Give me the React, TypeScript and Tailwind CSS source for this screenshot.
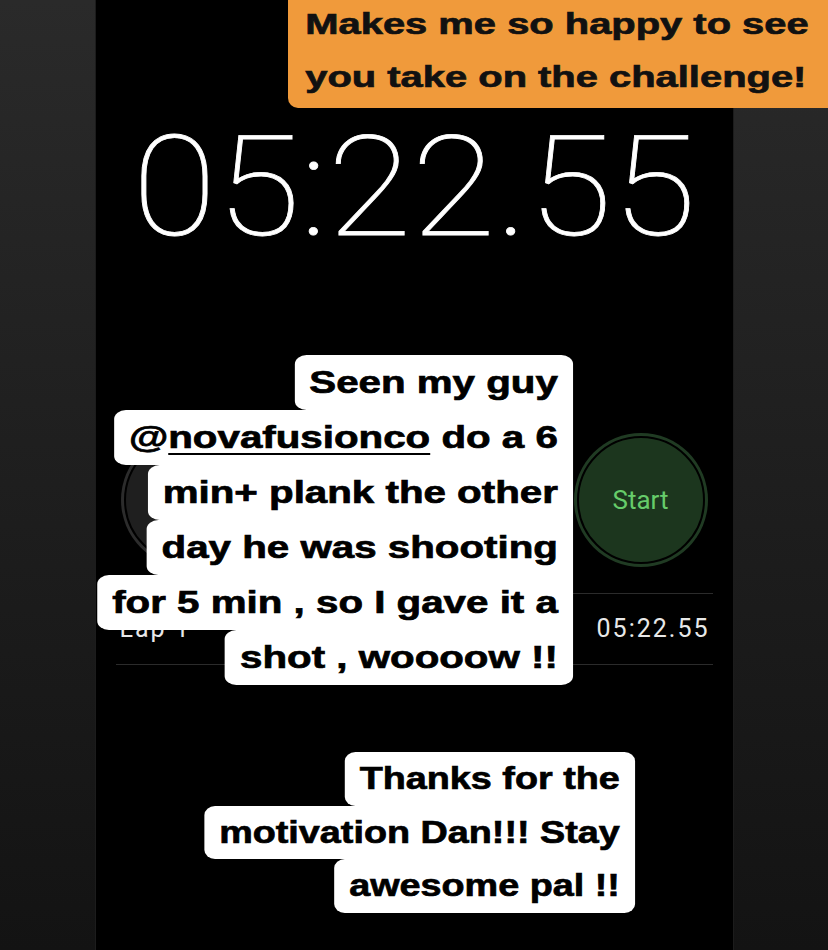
import type { ReactNode } from "react";

const caption = { fontFamily: '"Liberation Sans", Arial, sans-serif' };
const clock = { fontFamily: 'Roboto, "Noto Sans", sans-serif' };

function StoryText({ rows, rowClass }: { rows: ReactNode[]; rowClass: string }) {
  return (
    <div className="flex flex-col items-end">
      {rows.map((row, i) => (
        <div
          key={i}
          className={`bg-white text-black font-bold whitespace-nowrap rounded-l-[9px] [-webkit-text-stroke:0.7px_#000] ${rowClass} ${
            i === 0 ? "rounded-tr-[9px]" : ""
          } ${i === rows.length - 1 ? "rounded-br-[9px]" : ""}`}
        >
          {row}
        </div>
      ))}
    </div>
  );
}

export default function App() {
  const firstRows: ReactNode[] = [
    "Seen my guy",
    <>
      @<span className="underline decoration-[2px] underline-offset-[5px]">novafusionco</span> do a 6
    </>,
    "min+ plank the other",
    "day he was shooting",
    "for 5 min , so I gave it a",
    "shot , woooow !!",
  ];
  const secondRows: ReactNode[] = ["Thanks for the", "motivation Dan!!! Stay", "awesome pal !!"];

  return (
    <div className="relative h-[950px] w-full overflow-hidden bg-gradient-to-b from-[#2a2a2a] to-[#131313]">
      {/* phone screen */}
      <div className="mx-auto flex h-full w-[637px] flex-col bg-black shadow-[0_0_0_1px_#1c1c1c]" style={clock}>
        <div className="pt-[117px] text-center text-[140px] font-thin leading-none text-white">
          <span className="inline-block scale-x-[1.095] [-webkit-text-stroke:0.8px_#fff]">05:22.55</span>
        </div>

        <div className="mt-[176px] flex items-center justify-between px-[25px]">
          <div className="flex size-[134px] items-center justify-center rounded-full bg-[#2c2c2c] p-[3px]">
            <div className="flex size-full items-center justify-center rounded-full border-2 border-black bg-[#1f1f1f] text-[25px] text-white">
              Lap
            </div>
          </div>
          <div className="flex size-[134px] items-center justify-center rounded-full bg-[#203b23] p-[3px]">
            <div className="flex size-full items-center justify-center rounded-full border-2 border-black bg-[#1c361e] text-[26px] text-[#66cc6a]">
              Start
            </div>
          </div>
        </div>

        <div className="mx-[20px] mt-[26px] flex h-[72px] items-center justify-between border-y border-[#2b2b2b] pr-[3px] pl-[4px] text-[25px] tracking-[2px] text-[#e8e8e8]">
          <span>Lap 1</span>
          <span>05:22.55</span>
        </div>
      </div>

      {/* orange sticker */}
      <div className="absolute top-0 left-[288px] h-[108px] w-[560px] rounded-bl-[10px] bg-[#f09a3b]">
        <div
          className="mt-[-3px] origin-left scale-x-[1.33] pl-[13px] text-[30px] leading-[53px] font-bold text-[#111] [-webkit-text-stroke:0.7px_#111]"
          style={caption}
        >
          <div>Makes me so happy to see</div>
          <div>you take on the challenge!</div>
        </div>
      </div>

      {/* white captions */}
      <div className="absolute top-[355px] right-[255px] origin-right scale-x-[1.3]" style={caption}>
        <StoryText rows={firstRows} rowClass="h-[55px] px-[11.5px] text-[31px] leading-[55px]" />
      </div>
      <div className="absolute top-[752px] right-[193px] origin-right scale-x-[1.18]" style={caption}>
        <StoryText rows={secondRows} rowClass="h-[53.5px] px-[12.5px] text-[32px] leading-[53.5px]" />
      </div>
    </div>
  );
}
